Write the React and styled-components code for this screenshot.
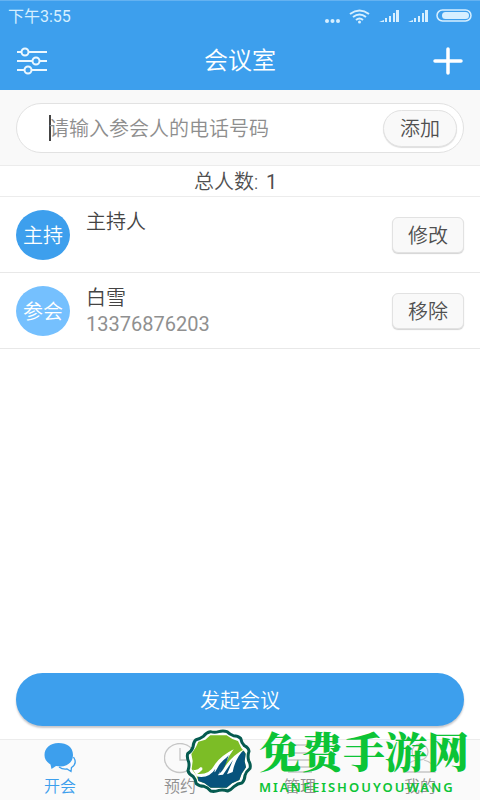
import React from "react";
import styled, { createGlobalStyle } from "styled-components";

const GlobalStyle = createGlobalStyle`
  * {
    box-sizing: border-box;
  }
  body {
    margin: 0;
    background-color: #fff;
    color: #505050;
    font-family: Roboto, "Noto Sans CJK SC", sans-serif;
    font-weight: 350;
  }
  button,
  input {
    font: inherit;
    color: inherit;
  }
  svg {
    display: block;
  }
`;

const Container = styled.div`
  position: relative;
  min-height: 100vh;
  display: flex;
  flex-direction: column;
`;

const Header = styled.header`
  height: 90px;
  color: #fff;
  background-color: #3d9fed;
  border-top: 1px solid #64b2f1;
`;

const StatusBar = styled.div`
  height: 32px;
  padding: 0 8px;
  display: flex;
  align-items: center;
  justify-content: space-between;
  font-size: 16px;
  line-height: 24px;
  color: #d6efff;
`;

const StatusTime = styled.span`
  font-weight: 400;
`;

const Title = styled.h1`
  margin: 0;
  font-size: 24px;
  line-height: 32px;
  font-weight: 350;
`;

const TitleBar = styled.div`
  height: 55px;
  padding: 0 16px;
  display: flex;
  align-items: center;
  justify-content: space-between;
`;

const IconButton = styled.button`
  padding: 0;
  border: none;
  background: none;
  color: #fff;
  cursor: pointer;
`;

const SearchSection = styled.form`
  padding: 13px 16px 12px;
  background-color: #f9f9f9;
  border-bottom: 1px solid #ececec;
`;

const SearchBox = styled.div`
  height: 50px;
  padding: 0 6px 0 32px;
  display: flex;
  align-items: center;
  background-color: #fff;
  border: 1px solid #e2e2e2;
  border-radius: 25px;
`;

const Caret = styled.span`
  width: 2px;
  height: 26px;
  margin-right: -2px;
  background-color: #444;
`;

const PhoneInput = styled.input`
  flex: 1;
  min-width: 0;
  height: 32px;
  padding: 2px 0 0;
  border: none;
  outline: none;
  background: none;
  font-size: 20px;
  &::placeholder {
    color: #8e8e8e;
    opacity: 1;
  }
`;

const AddButton = styled.button`
  width: 74px;
  height: 37px;
  padding: 2px 0 0;
  font-size: 20px;
  line-height: 32px;
  background-color: #f9f9f9;
  border: 1px solid #e2e2e2;
  border-radius: 19px;
  box-shadow: 0 1px 1px #dedede;
  cursor: pointer;
`;

const Total = styled.p`
  margin: 0;
  height: 31px;
  display: flex;
  justify-content: center;
  gap: 8px;
  font-size: 20px;
  line-height: 32px;
  border-bottom: 1px solid #ececec;
`;

const TotalCount = styled.span`
  min-width: 20px;
  font-weight: 400;
`;

const MemberList = styled.ul`
  flex: 1;
  margin: 0;
  padding: 0;
  list-style: none;
`;

const Member = styled.li`
  height: 76px;
  padding: 0 16px;
  display: flex;
  align-items: center;
  gap: 16px;
  border-bottom: 1px solid #e8e8e8;
`;

const Avatar = styled.span`
  width: 54px;
  height: 50px;
  display: flex;
  align-items: center;
  justify-content: center;
  font-size: 20px;
  color: #fff;
  background-color: ${(props) => (props.$host ? "#3d9fed" : "#75c0fe")};
  border-radius: 50%;
`;

const MemberInfo = styled.div`
  flex: 1;
  height: 52px;
  font-size: 20px;
  line-height: 26px;
`;

const MemberName = styled.div`
  color: #444;
`;

const MemberPhone = styled.div`
  color: #909090;
  font-weight: 400;
`;

const RowButton = styled.button`
  width: 72px;
  height: 36px;
  padding: 2px 0 0;
  font-size: 20px;
  line-height: 32px;
  background-color: #f9f9f9;
  border: 1px solid #e2e2e2;
  border-radius: 6px;
  box-shadow: 0 1px 1px #d4d4d4;
  cursor: pointer;
`;

const StartButton = styled.button`
  height: 53px;
  margin: 0 16px 13px;
  padding: 0;
  font-size: 20px;
  color: #fff;
  background-color: #3d9fed;
  border: none;
  border-radius: 27px;
  box-shadow: 0 2px 2px #c8c8cc;
  cursor: pointer;
`;

const TabBar = styled.nav`
  height: 61px;
  display: grid;
  grid-template-columns: repeat(4, 1fr);
  background-color: #fafafa;
  border-top: 1px solid #ececec;
`;

const Tab = styled.a`
  padding-top: 3px;
  display: flex;
  flex-direction: column;
  align-items: center;
  font-size: 16px;
  line-height: 24px;
  text-decoration: none;
  color: ${(props) => (props.$active ? "#3d9fed" : "#909090")};
`;

const Watermark = styled.div`
  position: absolute;
  right: 11px;
  bottom: 5px;
  display: flex;
  align-items: center;
  gap: 6px;
  pointer-events: none;
`;

const WatermarkText = styled.div`
  color: #0cc436;
`;

const WatermarkName = styled.div`
  padding-bottom: 8px;
  font-family: "Noto Serif CJK SC", "Noto Sans CJK SC", serif;
  font-size: 42px;
  line-height: 42px;
  font-weight: 900;
`;

const WatermarkPinyin = styled.div`
  font-family: "Noto Sans", sans-serif;
  font-size: 13px;
  line-height: 16px;
  font-weight: 600;
  letter-spacing: 2px;
`;

const StatusIcons = () => (
  <svg width="147" height="18" viewBox="0 0 147 18" fill="currentColor">
    <circle cx="2" cy="13" r="2" />
    <circle cx="7.500" cy="13" r="2" />
    <circle cx="13" cy="13" r="2" />
    <g fill="none" stroke="currentColor" strokeWidth="2">
      <path d="M25 6q9.500-7 19 0M28 9q6.500-5 13 0M31 12q3.500-3 7 0" />
      <rect x="112" y="2" width="34" height="11" rx="5.500" strokeWidth="1.500" />
    </g>
    <circle cx="34.500" cy="14" r="1.500" />
    <path d="M54 14l5-2v2zM60 10h2v4h-2zM64 8h2v6h-2zM68 5h2v9h-2zM71 2h3v12h-3z" />
    <path d="M83 14l5-2v2zM89 10h2v4h-2zM93 8h2v6h-2zM97 5h2v9h-2zM100 2h3v12h-3z" />
    <rect x="117" y="4" width="27" height="7" rx="3.500" />
  </svg>
);

const SlidersIcon = () => (
  <svg width="32" height="30" viewBox="0 0 32 30" fill="none" stroke="#ecf8ff" strokeWidth="2">
    <path d="M1 6h4M13 6h18M1 15h15M24 15h7M1 24h7M16 24h15" />
    <circle cx="9" cy="6" r="3.500" />
    <circle cx="20" cy="15" r="3.500" />
    <circle cx="12" cy="24" r="3.500" />
  </svg>
);

const PlusIcon = () => (
  <svg width="32" height="30" viewBox="0 0 32 30" fill="none" stroke="currentColor" strokeWidth="3.500" strokeLinecap="round">
    <path d="M3 15h26M16 3v24" />
  </svg>
);

const TAB_ICONS = {
  chat: (
    <>
      <path
        d="M14.500 0C6 0 .5 5 .5 12c0 4 2 7 6 9.500l1 4.500 4.500-3c10 2 17-3 17-11S23 0 14.500 0z"
        fill="currentColor"
        stroke="none"
      />
      <path d="M29.500 14c2.500 4 2 8-2 10.500l-.5 4-4-2.500c-3 .5-6-.5-8-2" />
    </>
  ),
  clock: (
    <>
      <ellipse cx="16" cy="15" rx="15.500" ry="14.500" />
      <path d="M16 5v12h9" />
    </>
  ),
  list: (
    <path d="M4 2h24M4 10h24M4 17h24M4 24h24M4 29h24" />
  ),
  person: (
    <>
      <circle cx="16" cy="9" r="8" />
      <path d="M12 17c-7 2-10 5-11 12h30c-1-7-4-10-11-12" />
    </>
  ),
};

const TabIcon = ({ name }) => (
  <svg
    width="32"
    height="32"
    viewBox="0 0 32 32"
    fill="none"
    stroke={name === "chat" ? "currentColor" : "#c6c6c6"}
    strokeWidth="1.300"
  >
    {TAB_ICONS[name]}
  </svg>
);

const WatermarkLogo = () => (
  <svg width="68" height="66" viewBox="12 10 204 196">
    <path
      d="M113 17Q126 13 138 17 147 26 157 29 171 29 179 37 181 50 190 59 203 65 204 76 199 90 203 104 210 116 207 127 195 137 192 148 191 163 183 171 170 172 160 181 150 192 140 195 126 190 114 193 100 198 89 195 80 184 69 181 54 181 46 173 44 160 36 151 23 144 21 134 26 120 23 108 17 94 20 83 32 76 36 63 37 48 45 41 58 38 67 31 76 19 88 17 101 21 113 17z"
      fill="#fff"
      stroke="#055b50"
      strokeWidth="9"
      strokeLinejoin="round"
    />
    <path
      d="M88 28H137L154 39 171 45 181 66 194 82 191 106 195 124 182 143 175 162 153 172 137 185H89L71 172 52 165 45 146 32 129 35 105 31 84 45 63 52 47 73 41z"
      fill="#7cbd26"
    />
    <path
      d="M50 151Q84 151 100 122 116 98 152 76L119 143 138 126 156 94 188 74 194 84 191 106 195 124 182 143 175 162 153 172 137 185H89L71 172 52 165z"
      fill="#07537c"
    />
    <path
      d="M36 131Q50 134 58 124 66 122 64 131L56 139 45 146z"
      fill="#fff"
    />
    <path
      d="M45 143Q84 148 99 119 118 90 158 70 137 99 124 134 148 92 190 69 162 98 155 138L138 145 156 102 126 146 111 148 140 92Q118 107 108 128 96 149 103 128 84 159 46 151z"
      fill="#fff"
    />
    <path d="M143 87Q124 110 114 144 131 132 143 87z" fill="#07537c" />
  </svg>
);

const MEMBERS = [
  { role: "主持", name: "主持人", action: "修改", host: true },
  { role: "参会", name: "白雪", phone: "13376876203", action: "移除" },
];

const TABS = [
  { icon: "chat", label: "开会", active: true },
  { icon: "clock", label: "预约" },
  { icon: "list", label: "管理" },
  { icon: "person", label: "我的" },
];

const App = () => {
  return (
    <Container>
      <GlobalStyle />
      <Header>
        <StatusBar>
          <StatusTime>下午3:55</StatusTime>
          <StatusIcons />
        </StatusBar>
        <TitleBar>
          <IconButton aria-label="设置">
            <SlidersIcon />
          </IconButton>
          <Title>会议室</Title>
          <IconButton aria-label="新建">
            <PlusIcon />
          </IconButton>
        </TitleBar>
      </Header>
      <SearchSection onSubmit={(e) => e.preventDefault()}>
        <SearchBox>
          <Caret />
          <PhoneInput
            type="tel"
            aria-label="电话号码"
            placeholder="请输入参会人的电话号码"
          />
          <AddButton type="submit">添加</AddButton>
        </SearchBox>
      </SearchSection>
      <Total>
        <span>总人数:</span>
        <TotalCount>1</TotalCount>
      </Total>
      <MemberList>
        {MEMBERS.map((member) => (
          <Member key={member.name}>
            <Avatar $host={member.host}>{member.role}</Avatar>
            <MemberInfo>
              <MemberName>{member.name}</MemberName>
              {member.phone && <MemberPhone>{member.phone}</MemberPhone>}
            </MemberInfo>
            <RowButton>{member.action}</RowButton>
          </Member>
        ))}
      </MemberList>
      <StartButton>发起会议</StartButton>
      <TabBar>
        {TABS.map((tab) => (
          <Tab key={tab.label} href="#" $active={tab.active}>
            <TabIcon name={tab.icon} />
            {tab.label}
          </Tab>
        ))}
      </TabBar>
      <Watermark>
        <WatermarkLogo />
        <WatermarkText>
          <WatermarkName>免费手游网</WatermarkName>
          <WatermarkPinyin>MIANFEISHOUYOUWANG</WatermarkPinyin>
        </WatermarkText>
      </Watermark>
    </Container>
  );
};

export default App;
